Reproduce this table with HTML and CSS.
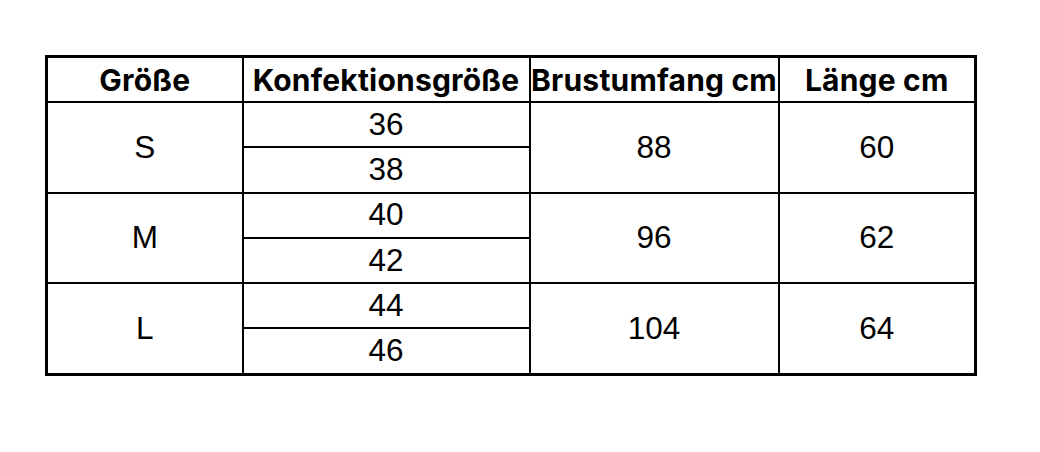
FILE: index.html
```html
<!DOCTYPE html>
<html lang="de">
<head>
<meta charset="utf-8">
<title>Größentabelle</title>
<link rel="stylesheet" href="styles.css">
</head>
<body>
<table class="size-table">
  <colgroup>
    <col class="c1"><col class="c2"><col class="c3"><col class="c4">
  </colgroup>
  <thead>
    <tr>
      <th class="h-groesse">Größe</th>
      <th class="h-konf">Konfektionsgröße</th>
      <th class="h-brust">Brustumfang cm</th>
      <th class="h-laenge">Länge cm</th>
    </tr>
  </thead>
  <tbody>
    <tr><td rowspan="2">S</td><td>36</td><td rowspan="2">88</td><td rowspan="2">60</td></tr>
    <tr class="sub"><td>38</td></tr>
    <tr><td rowspan="2">M</td><td>40</td><td rowspan="2">96</td><td rowspan="2">62</td></tr>
    <tr class="sub"><td>42</td></tr>
    <tr><td rowspan="2">L</td><td>44</td><td rowspan="2">104</td><td rowspan="2">64</td></tr>
    <tr class="sub"><td>46</td></tr>
  </tbody>
</table>
</body>
</html>
```
FILE: styles.css
```css
html, body {
  margin: 0;
  padding: 0;
  background: #ffffff;
}
body {
  padding: 55px 0 0 45px;
}
.size-table {
  border-collapse: collapse;
  border: 3px solid #000;
  table-layout: fixed;
  width: 929px;
  color: #000;
}
.c1 { width: 196px; }
.c2 { width: 287px; }
.c3 { width: 249px; }
.c4 { width: 197px; }
.size-table th,
.size-table td {
  border: 2px solid #000;
  padding: 0;
  text-align: center;
  vertical-align: middle;
  white-space: nowrap;
  overflow: hidden;
}
.size-table th {
  height: 43px;
  font-family: Inter, Roboto, "Liberation Sans", sans-serif;
  font-weight: 700;
  font-size: 30px;
  letter-spacing: 0.2px;
  line-height: 1;
}
.size-table td {
  height: 43.3px;
  font-family: "Liberation Sans", Arial, sans-serif;
  font-size: 31.5px;
  line-height: 1;
}
```
